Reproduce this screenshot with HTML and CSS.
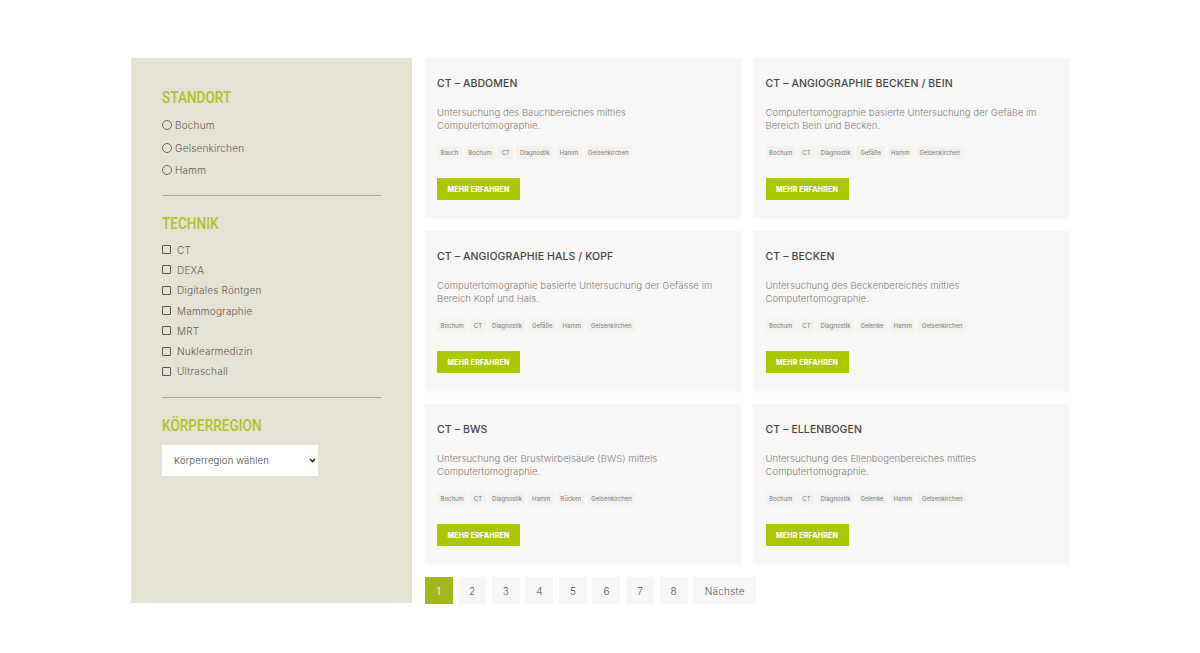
FILE: index.html
```html
<!DOCTYPE html>
<html lang="de">
<head>
<meta charset="utf-8">
<title>Untersuchungen</title>
<link rel="stylesheet" href="styles.css">
</head>
<body>
<main class="layout">
  <aside class="sidebar">
    <h2 class="filter-title">STANDORT</h2>
    <ul class="radio-list">
      <li class="radio-item"><span class="radio"></span>Bochum</li>
      <li class="radio-item"><span class="radio"></span>Gelsenkirchen</li>
      <li class="radio-item"><span class="radio"></span>Hamm</li>
    </ul>
    <hr class="divider">
    <h2 class="filter-title">TECHNIK</h2>
    <ul class="check-list">
      <li class="check-item"><span class="check"></span>CT</li>
      <li class="check-item"><span class="check"></span>DEXA</li>
      <li class="check-item"><span class="check"></span>Digitales Röntgen</li>
      <li class="check-item"><span class="check"></span>Mammographie</li>
      <li class="check-item"><span class="check"></span>MRT</li>
      <li class="check-item"><span class="check"></span>Nuklearmedizin</li>
      <li class="check-item"><span class="check"></span>Ultraschall</li>
    </ul>
    <hr class="divider divider-second">
    <h2 class="filter-title">KÖRPERREGION</h2>
    <div class="select"><span>Körperregion wählen</span>
      <svg class="chevron" width="7" height="5" viewBox="0 0 7 5"><path d="M1 1l2.5 2.5L6 1" fill="none" stroke="#222" stroke-width="1.6"/></svg>
    </div>
  </aside>
  <section class="content">
    <div class="cards">
      <article class="card">
        <h3 class="card-title">CT – ABDOMEN</h3>
        <p class="card-text">Untersuchung des Bauchbereiches mittles<br>Computertomographie.</p>
        <div class="tags"><span class="tag">Bauch</span><span class="tag">Bochum</span><span class="tag">CT</span><span class="tag">Diagnostik</span><span class="tag">Hamm</span><span class="tag">Gelsenkirchen</span></div>
        <a class="btn">MEHR ERFAHREN</a>
      </article>
      <article class="card">
        <h3 class="card-title">CT – ANGIOGRAPHIE BECKEN / BEIN</h3>
        <p class="card-text">Computertomographie basierte Untersuchung der Gefäße im<br>Bereich Bein und Becken.</p>
        <div class="tags"><span class="tag">Bochum</span><span class="tag">CT</span><span class="tag">Diagnostik</span><span class="tag">Gefäße</span><span class="tag">Hamm</span><span class="tag">Gelsenkirchen</span></div>
        <a class="btn">MEHR ERFAHREN</a>
      </article>
      <article class="card">
        <h3 class="card-title">CT – ANGIOGRAPHIE HALS / KOPF</h3>
        <p class="card-text">Computertomographie basierte Untersuchung der Gefässe im<br>Bereich Kopf und Hals.</p>
        <div class="tags"><span class="tag">Bochum</span><span class="tag">CT</span><span class="tag">Diagnostik</span><span class="tag">Gefäße</span><span class="tag">Hamm</span><span class="tag">Gelsenkirchen</span></div>
        <a class="btn">MEHR ERFAHREN</a>
      </article>
      <article class="card">
        <h3 class="card-title">CT – BECKEN</h3>
        <p class="card-text">Untersuchung des Beckenbereiches mittles<br>Computertomographie.</p>
        <div class="tags"><span class="tag">Bochum</span><span class="tag">CT</span><span class="tag">Diagnostik</span><span class="tag">Gelenke</span><span class="tag">Hamm</span><span class="tag">Gelsenkirchen</span></div>
        <a class="btn">MEHR ERFAHREN</a>
      </article>
      <article class="card">
        <h3 class="card-title">CT – BWS</h3>
        <p class="card-text">Untersuchung der Brustwirbelsäule (BWS) mittels<br>Computertomographie.</p>
        <div class="tags"><span class="tag">Bochum</span><span class="tag">CT</span><span class="tag">Diagnostik</span><span class="tag">Hamm</span><span class="tag">Rücken</span><span class="tag">Gelsenkirchen</span></div>
        <a class="btn">MEHR ERFAHREN</a>
      </article>
      <article class="card">
        <h3 class="card-title">CT – ELLENBOGEN</h3>
        <p class="card-text">Untersuchung des Ellenbogenbereiches mittles<br>Computertomographie.</p>
        <div class="tags"><span class="tag">Bochum</span><span class="tag">CT</span><span class="tag">Diagnostik</span><span class="tag">Gelenke</span><span class="tag">Hamm</span><span class="tag">Gelsenkirchen</span></div>
        <a class="btn">MEHR ERFAHREN</a>
      </article>
    </div>
    <nav class="pagination">
      <span class="page current">1</span><span class="page">2</span><span class="page">3</span><span class="page">4</span><span class="page">5</span><span class="page">6</span><span class="page">7</span><span class="page">8</span><span class="page next">Nächste</span>
    </nav>
  </section>
</main>
</body>
</html>
```
FILE: styles.css
```css
* { box-sizing: border-box; }
html, body { margin: 0; background: #fff; }
body { font-family: "Inter", "Liberation Sans", sans-serif; color: #666; height: 653px; overflow: hidden; }
ul { list-style: none; margin: 0; padding: 0; }
.layout { display: flex; gap: 13px; width: 938px; margin-left: 131px; padding-top: 58px; align-items: stretch; }
.sidebar { width: 281px; height: 545px; background: #e6e2d4; padding: 30px 31px 0 31px; }
.filter-title { margin: 0; font-family: "Roboto", "Liberation Sans", sans-serif; font-weight: 500; font-size: 17px; line-height: 18px; color: #afc32b; transform: scaleX(.8); transform-origin: 0 50%; white-space: nowrap; }
.radio-list { margin-top: 8px; }
.radio-item { display: flex; align-items: center; gap: 3px; height: 22.5px; font-size: 10px; font-weight: 300; letter-spacing: .2px; color: #5f5b53; }
.radio { width: 10px; height: 10px; border: 1px solid #666; border-radius: 50%; }
.divider { margin: 13px 0 18px; border: 0; border-top: 1px solid #a9a497; }
.divider-second { margin-top: 15px; }
.check-list { margin-top: 8px; }
.check-item { display: flex; align-items: center; gap: 6px; height: 20.3px; font-size: 10px; font-weight: 300; letter-spacing: .2px; color: #5f5b53; }
.check { width: 9px; height: 9px; border: 1px solid #555; border-radius: 1px; }
.select { display: flex; align-items: center; justify-content: space-between; margin-top: 11px; width: 156px; height: 31px; background: #fff; padding: 0 2px 0 12px; font-size: 9.5px; font-weight: 300; letter-spacing: .15px; color: #444; }
.content { width: 645px; }
.cards { display: grid; grid-template-columns: 316px 316px; column-gap: 12.5px; row-gap: 13px; }
.card { height: 160px; background: #f8f7f5; box-shadow: 0 1px 4px rgba(0,0,0,.02); padding: 19px 12.5px 0; }
.card-title { margin: 0; font-size: 10.5px; line-height: 13px; font-weight: 500; letter-spacing: .1px; color: #444; }
.card-text { margin: 16px 0 0; font-size: 9.5px; line-height: 13px; font-weight: 300; letter-spacing: .05px; color: #808080; white-space: nowrap; }
.tags { display: flex; gap: 3px; margin-top: 14px; }
.tag { padding: 0 3.5px; height: 13px; line-height: 13px; font-size: 6px; color: #777; background: #f3f2ef; }
.btn { display: flex; align-items: center; justify-content: center; width: 83px; height: 22px; margin-top: 19px; background: #abc700; color: #fff; font-size: 7px; font-weight: 800; letter-spacing: .2px; }
.pagination { display: flex; gap: 5.6px; margin-top: 13px; }
.page { display: flex; align-items: center; justify-content: center; width: 28px; height: 27px; background: #f8f7f5; font-size: 10px; font-weight: 300; color: #555; }
.current { background: #a3b71c; color: #fff; }
.next { width: 63px; letter-spacing: .2px; }
```
